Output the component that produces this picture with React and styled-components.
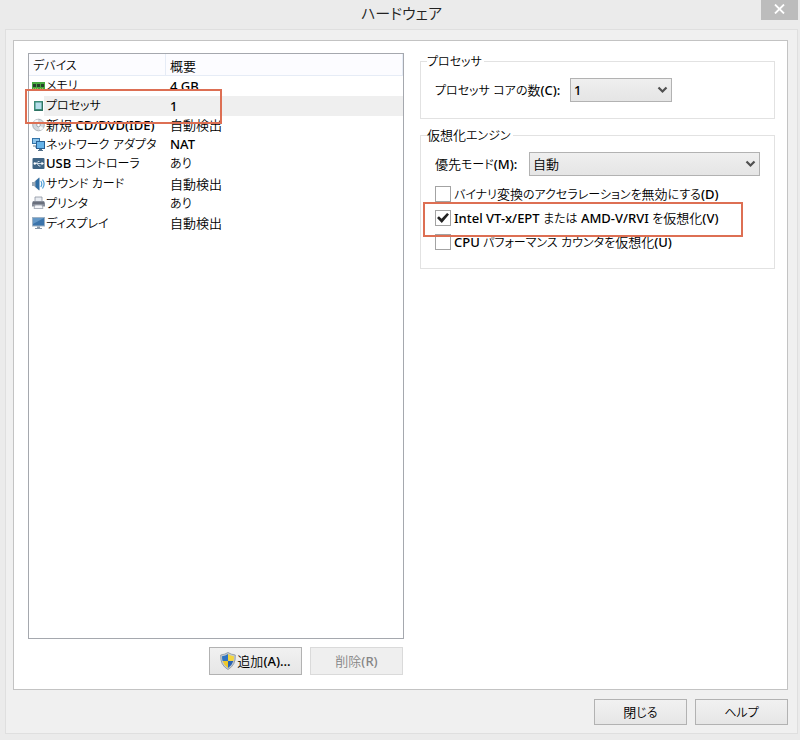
import React, { useState } from 'react'
import styled, { createGlobalStyle } from 'styled-components'

const GlobalStyle = createGlobalStyle`
  * {
    box-sizing: border-box;
  }
  body {
    margin: 0;
    background: #ebebeb;
    color: #000;
    font-family: 'Noto Sans', 'Noto Sans CJK JP', sans-serif;
    font-size: 13px;
    font-weight: 350;
    line-height: 18px;
    font-feature-settings: 'palt';
  }
  button,
  select,
  input {
    font: inherit;
    font-feature-settings: inherit;
    color: inherit;
    margin: 0;
  }
`

const Latin = styled.span`
  font-weight: 500;
`

const Kana = styled.span`
  font-size: 12px;
`

const Window = styled.div`
  min-height: 100vh;
  display: flex;
  flex-direction: column;
  padding: 0 2px 6px 5px;
`

const TitleBar = styled.header`
  height: 29px;
  display: grid;
  grid-template-columns: 37px 1fr 37px;
  align-items: start;
`

const Title = styled.h1`
  grid-column: 2;
  margin: 0;
  font-size: 15px;
  font-weight: 350;
  line-height: 26px;
  text-align: center;
  color: #222;
`

const CloseButton = styled.button`
  height: 20px;
  padding: 0 0 2px;
  border: 0;
  background: #bcbcbc;
  display: flex;
  align-items: center;
  justify-content: center;
`

const Frame = styled.div`
  flex: 1;
  display: flex;
  flex-direction: column;
  padding: 10px 9px 8px 7px;
  border: 1px solid #dfdfdf;
  background: #f0f0f0;
`

const Panel = styled.main`
  flex: 1;
  display: grid;
  grid-template-columns: minmax(0, 376fr) minmax(0, 355fr);
  gap: 16px;
  padding: 12px 12px 14px 14px;
  border: 1px solid #c3c3c3;
  background: #fff;
`

const Column = styled.section`
  display: flex;
  flex-direction: column;
`

const DeviceList = styled.div`
  flex: 1;
  border: 1px solid #a5a8ae;
  background: #fff;
`

const Table = styled.table`
  width: 100%;
  height: 179px;
  border-collapse: separate;
  border-spacing: 0;
  table-layout: fixed;
`

const HeadCell = styled.th`
  height: 22px;
  width: ${(p) => p.$width || 'auto'};
  padding: 2px 4px 0;
  border-right: 1px solid #e6ecf6;
  border-bottom: 1px solid #e6ecf6;
  background: #fcfcff;
  font-weight: 350;
  text-align: left;
`

const Cell = styled.td`
  padding: 0 4px;
  line-height: 18px;
  white-space: nowrap;
  background: ${(p) => (p.$selected ? '#efefef' : 'transparent')};
`

const NameCell = styled(Cell)`
  position: relative;
  padding: 0 0 0 3px;
  background: ${(p) =>
    p.$selected ? 'linear-gradient(to right, #fff 15px, #efefef 15px)' : 'transparent'};
`

const DeviceName = styled.span`
  display: flex;
  align-items: center;
  gap: 1px;
`

const Highlight = styled.span`
  position: absolute;
  z-index: 1;
  border: 2px solid #dd6f53;
  pointer-events: none;
`

const RowHighlight = styled(Highlight)`
  top: -7px;
  left: -4px;
  width: 197px;
  height: 35px;
`

const CheckHighlight = styled(Highlight)`
  top: -4px;
  left: -12px;
  width: 320px;
  height: 35px;
`

const ListActions = styled.div`
  display: flex;
  justify-content: flex-end;
  gap: 8px;
  padding: 8px 1px 0 0;
`

const Button = styled.button`
  width: 93px;
  height: 28px;
  padding: 0;
  border: 1px solid #b2b2b2;
  background: linear-gradient(#f1f1f1, #e6e6e6);
  display: flex;
  align-items: center;
  justify-content: center;
  gap: 1px;

  &:disabled {
    border-color: #dadada;
    background: #efefef;
    color: #858585;
  }
`

const FooterButton = styled(Button)`
  height: 26px;
`

const Footer = styled.footer`
  display: flex;
  justify-content: flex-end;
  gap: 8px;
  padding-top: 9px;
`

const Group = styled.fieldset`
  margin: 0 0 8px;
  min-width: 0;
  padding: 8px 14px ${(p) => p.$bottom}px;
  border: 1px solid #e2e2e2;
`

const Legend = styled.legend`
  margin-left: -8px;
  padding: 0 2px 0 0;
  line-height: 16px;
`

const Field = styled.div`
  display: flex;
  align-items: center;
`

const FieldLabel = styled.label`
  width: ${(p) => p.$width};
  white-space: nowrap;
`

const SelectBox = styled.div`
  position: relative;
  width: ${(p) => p.$width || 'auto'};
  flex: ${(p) => (p.$width ? 'none' : 1)};
`

const Select = styled.select`
  display: block;
  width: 100%;
  height: 24px;
  padding: 0 24px 0 3px;
  border: 1px solid #b2b2b2;
  border-radius: 0;
  background: linear-gradient(#efefef, #e5e5e5);
  font-weight: ${(p) => p.$weight};
  appearance: none;
`

const SelectArrow = styled.svg`
  position: absolute;
  top: 8px;
  right: 4px;
  pointer-events: none;
`

const Options = styled.div`
  display: flex;
  flex-direction: column;
  align-items: flex-start;
  padding-top: 6px;
`

const Option = styled.label`
  position: relative;
  display: flex;
  align-items: center;
  gap: 3px;
  height: 24px;
  white-space: nowrap;
`

const Checkbox = styled.input`
  appearance: none;
  width: 16px;
  height: 16px;
  border: 1px solid #a3a3a3;
  background: #fff;
  display: grid;
  place-items: center;

  &:checked::before {
    content: '';
    width: 12px;
    height: 10px;
    background: #222;
    clip-path: polygon(0 50%, 16% 32%, 38% 58%, 84% 0, 100% 14%, 40% 100%);
  }
`

const MemoryIcon = () => (
  <svg width="13" height="16" viewBox="0 0 13 16">
    <path d="M0 4h13v8H0z" fill="#46a83f" />
    <path d="M1 6h3v3H1zM5 6h3v3H5zM9 6h3v3H9z" fill="#26402a" />
    <path d="M1 10h1v2H1zM3 10h1v2H3zM5 10h1v2H5zM8 10h1v2H8zM10 10h1v2h-1z" fill="#a5b84e" />
  </svg>
)

const ProcessorIcon = () => (
  <svg width="13" height="16" viewBox="0 0 13 16">
    <path d="M2 3h9v10H2z" fill="#3c8b78" />
    <path d="M3.500 4.500h6v6.500h-6z" fill="#b5dcea" />
    <path d="M10 4h1v9H3v-1h7z" fill="#2f7161" />
  </svg>
)

const DiscIcon = () => (
  <svg width="13" height="16" viewBox="0 0 13 16">
    <circle cx="6.500" cy="8" r="5.800" fill="#d3d8de" stroke="#9ba3ab" strokeWidth="0.800" />
    <path d="M6.500 8L2 4.500A5.500 5.500 0 0 1 6 2.500zM6.500 8l5 3A5.500 5.500 0 0 1 8 13.300z" fill="#f6f8fa" />
    <circle cx="6.500" cy="8" r="1.800" fill="#fff" stroke="#8d979f" strokeWidth="0.800" />
  </svg>
)

const NetworkIcon = () => (
  <svg width="13" height="16" viewBox="0 0 13 16">
    <path d="M0 2h8v6H0z" fill="#3474a8" />
    <path d="M1 3h6v4H1z" fill="#8cc3ea" />
    <path d="M1 10h3v2h2" fill="none" stroke="#60788c" />
    <path d="M4 5h9v8H4z" fill="#285f94" />
    <path d="M5 6h7v6H5z" fill="#67b3e8" />
    <path d="M7 13h3v1h1v1H6v-1h1z" fill="#55718a" />
  </svg>
)

const UsbIcon = () => (
  <svg width="13" height="16" viewBox="0 0 13 16">
    <rect x="0.500" y="2" width="12" height="11" rx="1" fill="#3f6484" />
    <path d="M2 7.500h8M4 7.500l2-2h1.500M5 7.500l2 2.500h1.500" fill="none" stroke="#dfe8f0" strokeWidth="0.900" />
    <circle cx="2.800" cy="7.500" r="1.200" fill="#fff" />
    <path d="M9.500 5.700l2.500 1.800-2.500 1.800z" fill="#fff" />
  </svg>
)

const SoundIcon = () => (
  <svg width="13" height="16" viewBox="0 0 13 16">
    <path d="M0 6h2l5-4.500v13L2 10H0z" fill="#9aa9b6" />
    <path d="M3.500 5L7.500 1.500v13L3.500 11z" fill="#2e6da3" />
    <path d="M8.800 5q2 3 0 6M10.500 3.500q3.200 4.500 0 9" fill="none" stroke="#4f9ed6" strokeWidth="1.200" />
  </svg>
)

const PrinterIcon = () => (
  <svg width="13" height="16" viewBox="0 0 13 16">
    <path d="M3 2h7v5H3z" fill="#e8ecf2" stroke="#8b93a0" strokeWidth="0.800" />
    <path d="M1 6h11l1 2v3.500H0V8z" fill="#878d9a" />
    <path d="M1 7.500h11v1H1z" fill="#4c5260" />
    <path d="M3 10h7l1 3.500H2z" fill="#f4f5f9" stroke="#9ca2ad" strokeWidth="0.800" />
  </svg>
)

const DisplayIcon = () => (
  <svg width="13" height="16" viewBox="0 0 13 16">
    <path d="M0 2h13v9.500H0z" fill="#9fb2c4" />
    <path d="M1 3h11v7.500H1z" fill="#3b74ab" />
    <path d="M1 3h11L1 9z" fill="#6397c6" />
    <path d="M5 11.500h3V13h2v1H3v-1h2z" fill="#8898a8" />
  </svg>
)

const ShieldIcon = () => (
  <svg width="16" height="18" viewBox="0 0 16 18">
    <path d="M8 .5Q11 2.500 15.300 3q.7 10-7.300 14.500Q0 13 .7 3 5 2.500 8 .5z" fill="#c6ccd2" stroke="#87929b" strokeWidth="0.800" />
    <path d="M8 2Q5.500 3.700 2 4.200q0 2.600.6 4.800H8z" fill="#2f73c1" />
    <path d="M8 2q2.500 1.700 6 2.200 0 2.600-.6 4.800H8z" fill="#f3d63f" />
    <path d="M2.600 9H8v7Q4 13.500 2.600 9z" fill="#efc92c" />
    <path d="M13.400 9H8v7q4-2.500 5.400-7z" fill="#2863b2" />
  </svg>
)

const devices = [
  { name: 'メモリ', summary: '4 GB', Icon: MemoryIcon },
  { name: 'プロセッサ', summary: '1', Icon: ProcessorIcon, selected: true },
  { name: '新規 CD/DVD(IDE)', summary: '自動検出', Icon: DiscIcon },
  { name: 'ネットワーク アダプタ', summary: 'NAT', Icon: NetworkIcon },
  { name: 'USB コントローラ', summary: 'あり', Icon: UsbIcon },
  { name: 'サウンド カード', summary: '自動検出', Icon: SoundIcon },
  { name: 'プリンタ', summary: 'あり', Icon: PrinterIcon },
  { name: 'ディスプレイ', summary: '自動検出', Icon: DisplayIcon },
]

const engineOptions = [
  { id: 'binary', label: 'バイナリ変換のアクセラレーションを無効にする(D)' },
  { id: 'vtx', label: 'Intel VT-x/EPT または AMD-V/RVI を仮想化(V)', highlighted: true },
  { id: 'counter', label: 'CPU パフォーマンス カウンタを仮想化(U)' },
]

// latin runs are heavier and kana runs smaller than the kanji around them
const Label = ({ children }) => (
  <span>
    {children.split(/([!-~]+|[ぁ-ヿ]+)/).map((run, i) => {
      if (/^[!-~]/.test(run)) return <Latin key={i}>{run}</Latin>
      if (/^[ぁ-ヿ]/.test(run)) return <Kana key={i}>{run}</Kana>
      return run
    })}
  </span>
)

const Dropdown = ({ id, width, weight, options }) => (
  <SelectBox $width={width}>
    <Select id={id} $weight={weight}>
      {options.map((o) => (
        <option key={o}>{o}</option>
      ))}
    </Select>
    <SelectArrow width="11" height="8" viewBox="0 0 11 8" aria-hidden="true">
      <path d="M1.500 1.500l4 4 4-4" fill="none" stroke="#505050" strokeWidth="2.200" />
    </SelectArrow>
  </SelectBox>
)

const App = () => {
  const [checked, setChecked] = useState({ vtx: true })
  const toggle = (id) => setChecked({ ...checked, [id]: !checked[id] })

  return (
    <>
      <GlobalStyle />
      <Window>
        <TitleBar>
          <Title>ハードウェア</Title>
          <CloseButton aria-label="閉じる">
            <svg width="11" height="10" viewBox="0 0 11 10">
              <path d="M1 .5l9 9M10 .5l-9 9" stroke="#fff" strokeWidth="1.800" />
            </svg>
          </CloseButton>
        </TitleBar>
        <Frame>
          <Panel>
            <Column>
              <DeviceList>
                <Table>
                  <thead>
                    <tr>
                      <HeadCell $width="137px">
                        <Label>デバイス</Label>
                      </HeadCell>
                      <HeadCell>
                        <Label>概要</Label>
                      </HeadCell>
                    </tr>
                  </thead>
                  <tbody>
                    {devices.map(({ name, summary, Icon, selected }) => (
                      <tr key={name}>
                        <NameCell $selected={selected}>
                          <DeviceName>
                            <Icon />
                            <Label>{name}</Label>
                          </DeviceName>
                          {selected && <RowHighlight />}
                        </NameCell>
                        <Cell $selected={selected}>
                          <Label>{summary}</Label>
                        </Cell>
                      </tr>
                    ))}
                  </tbody>
                </Table>
              </DeviceList>
              <ListActions>
                <Button>
                  <ShieldIcon />
                  <Label>追加(A)...</Label>
                </Button>
                <Button disabled>
                  <Label>削除(R)</Label>
                </Button>
              </ListActions>
            </Column>
            <Column>
              <Group $bottom={16}>
                <Legend>
                  <Label>プロセッサ</Label>
                </Legend>
                <Field>
                  <FieldLabel htmlFor="cores" $width="135px">
                    <Label>プロセッサ コアの数(C):</Label>
                  </FieldLabel>
                  <Dropdown id="cores" width="102px" weight={500} options={['1', '2', '4']} />
                </Field>
              </Group>
              <Group $bottom={14}>
                <Legend>
                  <Label>仮想化エンジン</Label>
                </Legend>
                <Field>
                  <FieldLabel htmlFor="mode" $width="94px">
                    <Label>優先モード(M):</Label>
                  </FieldLabel>
                  <Dropdown id="mode" weight={350} options={['自動']} />
                </Field>
                <Options>
                  {engineOptions.map(({ id, label, highlighted }) => (
                    <Option key={id}>
                      <Checkbox
                        type="checkbox"
                        checked={!!checked[id]}
                        onChange={() => toggle(id)}
                      />
                      <Label>{label}</Label>
                      {highlighted && <CheckHighlight />}
                    </Option>
                  ))}
                </Options>
              </Group>
            </Column>
          </Panel>
          <Footer>
            <FooterButton>
              <Label>閉じる</Label>
            </FooterButton>
            <FooterButton>
              <Label>ヘルプ</Label>
            </FooterButton>
          </Footer>
        </Frame>
      </Window>
    </>
  )
}

export default App
